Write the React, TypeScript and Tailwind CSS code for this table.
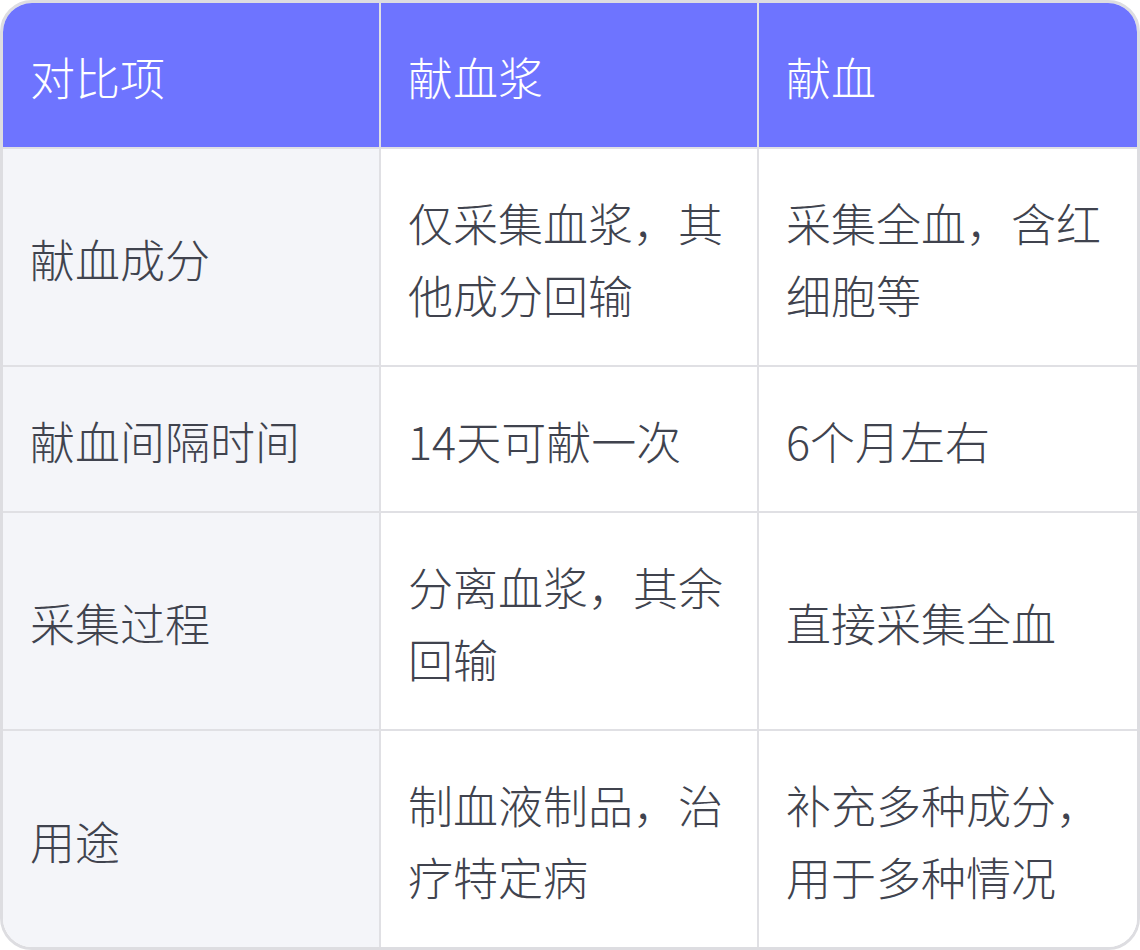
const headers = ["对比项", "献血浆", "献血"];

const rows = [
  ["献血成分", "仅采集血浆，其他成分回输", "采集全血，含红细胞等"],
  ["献血间隔时间", "14天可献一次", "6个月左右"],
  ["采集过程", "分离血浆，其余回输", "直接采集全血"],
  ["用途", "制血液制品，治疗特定病", "补充多种成分，用于多种情况"],
];

const App = () => {
  return (
    <div className="w-[1140px] h-[950px] bg-white font-['Noto_Sans_CJK_SC','Noto_Sans',sans-serif] font-light">
      <div className="h-full rounded-[32px] border-[3px] border-[#dddde1] overflow-hidden">
        <div className="grid grid-cols-3 bg-[#6e74ff]">
          {headers.map((h, i) => (
            <div
              key={h}
              className={
                "px-[27px] pt-[38px] pb-[34px] text-[45px] leading-[72px] text-white border-b-2 border-[#e0e0e4] " +
                (i < 2 ? "border-r-2" : "")
              }
            >
              {h}
            </div>
          ))}
        </div>
        {rows.map((row, r) => (
          <div key={r} className="grid grid-cols-3">
            {row.map((cell, c) => (
              <div
                key={c}
                className={
                  "px-[27px] pt-[38px] pb-[34px] text-[45px] leading-[72px] text-[#40434e] border-[#e0e0e4] flex items-center " +
                  (c < 2 ? "border-r-2 " : "") +
                  (r < rows.length - 1 ? "border-b-2 " : "") +
                  (c === 0 ? "bg-[#f4f5f9]" : "bg-white")
                }
              >
                <span>{cell}</span>
              </div>
            ))}
          </div>
        ))}
      </div>
    </div>
  );
};

export default App;
